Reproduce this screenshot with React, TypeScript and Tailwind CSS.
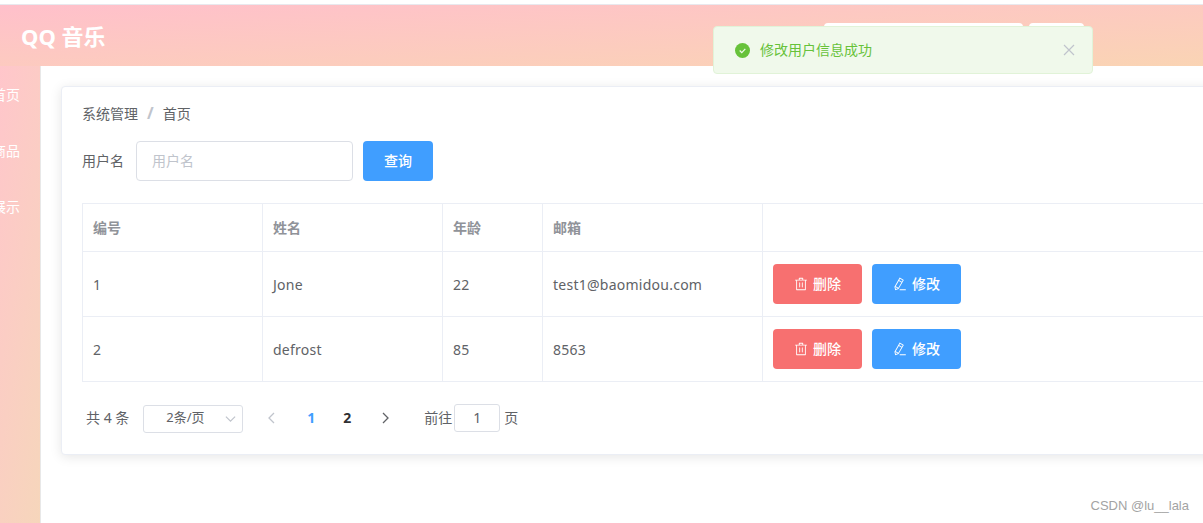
const font = { fontFamily: '"Noto Sans", "Noto Sans CJK SC", sans-serif' }

const users = [
  { id: 1, name: 'Jone', age: 22, email: 'test1@baomidou.com' },
  { id: 2, name: 'defrost', age: 85, email: '8563' },
]

function TrashIcon() {
  return (
    <svg viewBox="0 0 1024 1024" className="h-[14px] w-[14px]" fill="currentColor">
      <path d="M160 256H96a32 32 0 0 1 0-64h256V95.936a32 32 0 0 1 32-32h256a32 32 0 0 1 32 32V192h256a32 32 0 1 1 0 64h-64v672a32 32 0 0 1-32 32H192a32 32 0 0 1-32-32V256zm448-64v-64H416v64h192zM224 896h576V256H224v640zm192-128a32 32 0 0 1-32-32V416a32 32 0 0 1 64 0v320a32 32 0 0 1-32 32zm192 0a32 32 0 0 1-32-32V416a32 32 0 0 1 64 0v320a32 32 0 0 1-32 32z" />
    </svg>
  )
}

function PenIcon() {
  return (
    <svg viewBox="0 0 1024 1024" className="h-[14px] w-[14px]" fill="currentColor">
      <path d="m199.04 672.64 193.984 112 224-387.968-193.92-112-224 388.032zm-23.872 60.16 32.896 148.288 144.896-45.696L175.168 732.8zM455.04 229.248l193.92 112 56.704-98.112-193.984-112-56.64 98.112zM104.32 708.8l384-665.024 304.768 175.936L409.152 884.8h.064l-248.448 78.336L104.32 708.8zm384 254.272v-64h448v64h-448z" />
    </svg>
  )
}

function Chevron({ dir, className }: { dir: 'left' | 'right' | 'down'; className: string }) {
  const d = dir === 'left' ? 'M8 1 3 6l5 5' : dir === 'right' ? 'M4 1l5 5-5 5' : 'M1 4l5 5 5-5'
  return (
    <svg viewBox="0 0 12 12" className={className} fill="none" stroke="currentColor" strokeWidth="1.3">
      <path d={d} />
    </svg>
  )
}

function Toast() {
  return (
    <div className="absolute left-[713px] top-[26px] flex h-[48px] w-[380px] items-center rounded border border-[#e1f3d8] bg-[#f0f9eb] pl-[21px] pr-[17px] text-[#67c23a]">
      <svg viewBox="0 0 16 16" className="h-[15px] w-[15px]">
        <circle cx="8" cy="8" r="8" fill="#67c23a" />
        <path d="m5 8 2.2 2.2L11 6.2" fill="none" stroke="#f0f9eb" strokeWidth="1.3" />
      </svg>
      <span className="ml-[10px] flex-1 pb-px text-[14px]">修改用户信息成功</span>
      <svg viewBox="0 0 12 12" className="h-[12px] w-[12px] text-[#c0c4cc]" fill="none" stroke="currentColor" strokeWidth="1.2">
        <path d="m1 1 10 10M11 1 1 11" />
      </svg>
    </div>
  )
}

export default function App() {
  return (
    <div className="relative h-[523px] w-[1203px] overflow-hidden bg-white" style={font}>
      <div className="h-[5px] border-b border-[#e8e8ee] bg-white" />
      <header className="flex h-[61px] items-start justify-between bg-gradient-to-br from-[#ffc0cb] to-[#fad4b4] pl-[21px] pr-[119px]">
        <h1 className="mt-[13px] text-[22px] leading-[36px] font-bold text-white">QQ 音乐</h1>
        <div className="mt-[18px] flex gap-[6px]">
          <div className="h-[30px] w-[199px] rounded-sm bg-white" />
          <div className="h-[30px] w-[55px] rounded-sm bg-white" />
        </div>
      </header>

      <div className="flex h-[457px]">
        <aside className="flex w-[41px] shrink-0 flex-col items-end gap-[36px] overflow-hidden whitespace-nowrap border-r border-[#e8e8e8] bg-[linear-gradient(100deg,#ffc6cb,#f6d6bb)] pr-5 pt-[19px] text-[14px] leading-[20px] text-white">
          <span>首页</span>
          <span>商品</span>
          <span>展示</span>
        </aside>

        <main className="min-w-0 flex-1 pl-5 pt-5">
          <div className="h-[369px] w-[1300px] rounded border border-[#ebeef5] bg-white p-5 shadow-[0_2px_12px_0_rgba(0,0,0,0.1)]">
            <nav className="-mt-px flex h-[14px] items-center text-[14px] text-[#606266]">
              <span>系统管理</span>
              <span className="mx-[9px] text-[16px] font-bold text-[#c0c4cc]">/</span>
              <span>首页</span>
            </nav>

            <form className="mt-[21px] flex items-center">
              <label className="w-[54px] pb-[2px] text-[14px] text-[#606266]">用户名</label>
              <div className="flex h-10 w-[217px] items-center rounded border border-[#dcdfe6] px-[15px] pb-[2px] text-[14px] text-[#c0c4cc]">
                用户名
              </div>
              <button type="button" className="ml-[10px] h-10 w-[70px] rounded bg-[#409eff] pb-px text-[14px] font-medium text-white">
                查询
              </button>
            </form>

            <table className="mt-[22px] w-[1300px] table-fixed border-collapse border border-[#ebeef5] text-[14px] tracking-[0.25px] text-[#606266]">
              <colgroup>
                <col className="w-[180px]" />
                <col className="w-[180px]" />
                <col className="w-[100px]" />
                <col className="w-[220px]" />
                <col />
              </colgroup>
              <thead>
                <tr className="h-[48px] text-left text-[#909399]">
                  {['编号', '姓名', '年龄', '邮箱', ''].map((h) => (
                    <th key={h} className="border border-[#ebeef5] px-[10px] font-bold tracking-normal">
                      {h}
                    </th>
                  ))}
                </tr>
              </thead>
              <tbody>
                {users.map((u) => (
                  <tr key={u.id} className="h-[65px]">
                    <td className="border border-[#ebeef5] px-[10px]">{u.id}</td>
                    <td className="border border-[#ebeef5] px-[10px]">{u.name}</td>
                    <td className="border border-[#ebeef5] px-[10px]">{u.age}</td>
                    <td className="border border-[#ebeef5] px-[10px]">{u.email}</td>
                    <td className="border border-[#ebeef5] px-[10px]">
                      <div className="flex gap-[10px] tracking-normal">
                        <button type="button" className="flex h-10 w-[89px] items-center justify-center gap-[5px] rounded bg-[#f77070] pb-px text-[14px] font-medium text-white">
                          <TrashIcon />
                          删除
                        </button>
                        <button type="button" className="flex h-10 w-[89px] items-center justify-center gap-[5px] rounded bg-[#409eff] pb-px text-[14px] font-medium text-white">
                          <PenIcon />
                          修改
                        </button>
                      </div>
                    </td>
                  </tr>
                ))}
              </tbody>
            </table>

            <div className="mt-[22px] flex h-7 items-center pl-[4px] text-[14px] text-[#606266]">
              <span className="pb-[2px]">共 4 条</span>
              <div className="ml-[14px] mt-px flex h-7 w-[100px] items-center justify-between rounded-[3px] border border-[#dcdfe6] pb-px pl-[22px] pr-[6px] text-[13px]">
                <span>2条/页</span>
                <Chevron dir="down" className="h-[11px] w-[11px] text-[#c0c4cc]" />
              </div>
              <div className="ml-[11px] flex w-[36px] justify-center">
                <Chevron dir="left" className="h-3 w-3 text-[#c0c4cc]" />
              </div>
              <span className="flex w-[42px] justify-center pb-[2px] font-bold text-[#409eff]">1</span>
              <span className="flex w-[30px] justify-center pb-[2px] font-bold text-[#303133]">2</span>
              <div className="flex w-[46px] justify-center">
                <Chevron dir="right" className="h-3 w-3 text-[#606266]" />
              </div>
              <span className="ml-[16px] pb-[2px]">前往</span>
              <div className="ml-[2px] mr-[4px] flex h-7 w-[46px] items-center justify-center rounded-[3px] border border-[#dcdfe6] pb-[2px]">1</div>
              <span className="pb-[2px]">页</span>
            </div>
          </div>
        </main>
      </div>

      <Toast />
      <span className="absolute bottom-[9px] right-[14px] text-[13px] leading-[16px] text-[#a3a3a3]" style={{ fontFamily: '"Liberation Sans", sans-serif' }}>
        CSDN @lu__lala
      </span>
    </div>
  )
}
